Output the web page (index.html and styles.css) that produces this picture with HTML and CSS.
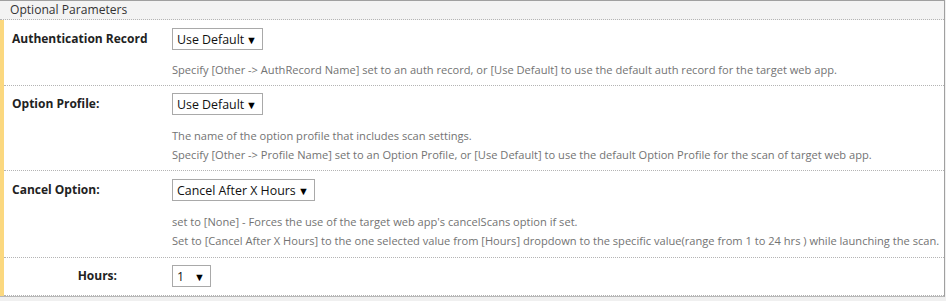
FILE: index.html
```html
<!DOCTYPE html>
<html>
<head>
<meta charset="utf-8">
<link rel="stylesheet" href="styles.css">
</head>
<body>
<div class="panel">
  <div class="panel-head">Optional Parameters</div>
  <div class="panel-body">
    <div class="row">
      <div class="label">Authentication Record</div>
      <div class="value">
        <div class="select w-default"><span>Use Default</span><span class="arrow">▼</span></div>
        <div class="desc">
          <p>Specify [Other -&gt; AuthRecord Name] set to an auth record, or [Use Default] to use the default auth record for the target web app.</p>
        </div>
      </div>
    </div>
    <div class="row">
      <div class="label">Option Profile:</div>
      <div class="value">
        <div class="select w-default"><span>Use Default</span><span class="arrow">▼</span></div>
        <div class="desc desc-low">
          <p>The name of the option profile that includes scan settings.</p>
          <p>Specify [Other -&gt; Profile Name] set to an Option Profile, or [Use Default] to use the default Option Profile for the scan of target web app.</p>
        </div>
      </div>
    </div>
    <div class="row">
      <div class="label">Cancel Option:</div>
      <div class="value">
        <div class="select w-cancel"><span>Cancel After X Hours</span><span class="arrow">▼</span></div>
        <div class="desc desc-low">
          <p>set to [None] - Forces the use of the target web app's cancelScans option if set.</p>
          <p>Set to [Cancel After X Hours] to the one selected value from [Hours] dropdown to the specific value(range from 1 to 24 hrs ) while launching the scan.</p>
        </div>
      </div>
    </div>
    <div class="row row-last">
      <div class="label label-right">Hours:</div>
      <div class="value">
        <div class="select w-hours"><span>1</span><span class="arrow">▼</span></div>
      </div>
    </div>
  </div>
</div>
</body>
</html>
```
FILE: styles.css
```css
html, body {
  margin: 0;
  padding: 0;
  background: #f0f0f0;
}
body {
  font-family: "Open Sans", "Noto Sans", sans-serif;
  color: #333;
}
.panel {
  width: 945px;
  height: 297px;
  border-right: 1px solid #a0a0a0;
  border-top: 1px solid #a0a0a0;
  border-bottom: 1px solid #b8b8b8;
  background: #fff;
  box-sizing: border-box;
  display: flex;
  flex-direction: column;
}
.panel-head {
  background: #f3f3f3;
  height: 18px;
  line-height: 18px;
  font-size: 12.1px;
  padding-left: 10px;
  color: #333;
  border-bottom: 1px dotted #b4b4b4;
}
.panel-body {
  flex: 1;
  border-left: 4px solid #fbd87f;
}
.row {
  display: flex;
  border-bottom: 1px dotted #b4b4b4;
  padding: 8px 0 6px;
}
.row:nth-child(2) { padding: 7px 0 6px; }
.row:nth-child(3) { padding: 8px 0 7px; }
.row-last { padding: 7px 0 8px; }
.label {
  flex-shrink: 0;
  width: 160px;
  padding-left: 8px;
  font-weight: 700;
  font-size: 12px;
  line-height: 21px;
  color: #222;
}
.label-right {
  text-align: right;
  padding-left: 0;
  width: 113px;
  padding-right: 55px;
}
.value {
  flex: 1;
  min-width: 0;
}
.select {
  display: flex;
  align-items: center;
  justify-content: space-between;
  box-sizing: border-box;
  height: 22px;
  border: 1px solid #a9a9a9;
  background: #fff;
  font-size: 12.4px;
  color: #111;
  padding: 0 5px 0 4px;
}
.w-default { width: 91px; }
.w-cancel { width: 143px; }
.w-hours { width: 39px; }
.arrow {
  font-size: 11px;
  color: #000;
  line-height: 1;
}
.desc {
  margin-top: 10px;
  font-size: 11.1px;
  color: #737373;
}
.desc-low { margin-top: 11px; }
.desc p {
  margin: 0;
  line-height: 19px;
  white-space: nowrap;
}
```
